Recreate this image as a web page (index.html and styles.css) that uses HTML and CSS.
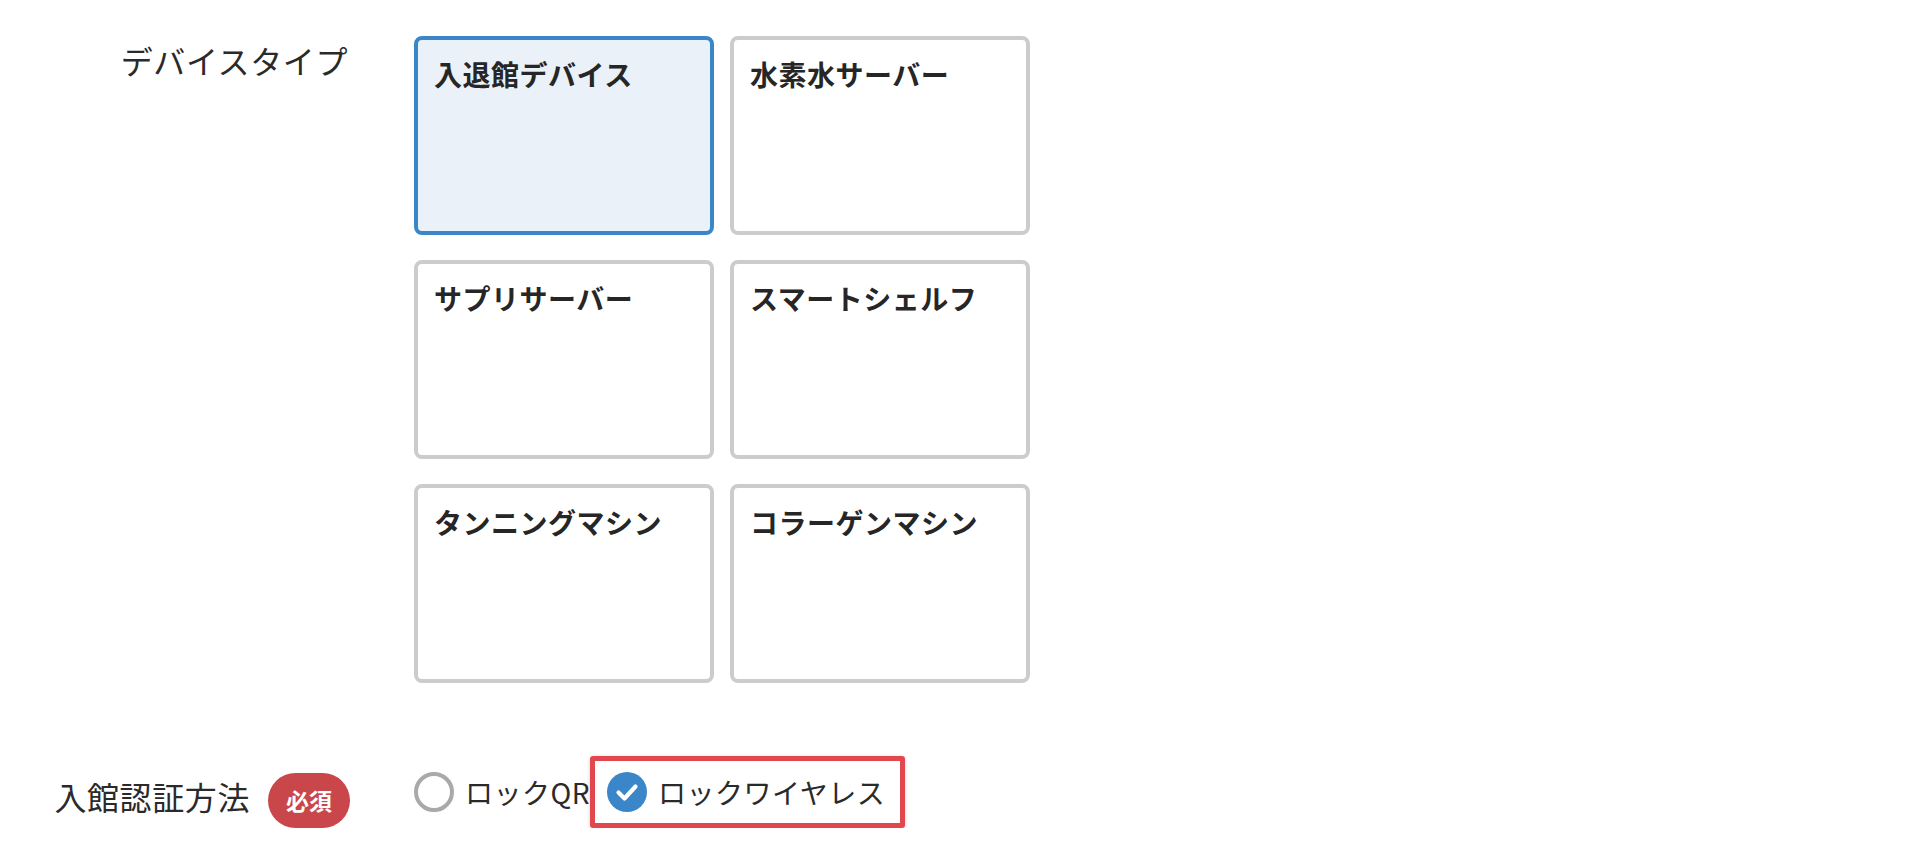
FILE: index.html
```html
<!DOCTYPE html>
<html lang="ja">
<head>
<meta charset="utf-8">
<title>デバイス設定</title>
<link rel="stylesheet" href="styles.css">
</head>
<body>
<div class="form">
  <div class="row row-top">
    <div class="label-col">
      <span class="label">デバイスタイプ</span>
    </div>
    <div class="content">
      <div class="cards">
        <div class="card selected"><span class="card-title">入退館デバイス</span></div>
        <div class="card"><span class="card-title">水素水サーバー</span></div>
        <div class="card"><span class="card-title">サプリサーバー</span></div>
        <div class="card"><span class="card-title">スマートシェルフ</span></div>
        <div class="card"><span class="card-title">タンニングマシン</span></div>
        <div class="card"><span class="card-title">コラーゲンマシン</span></div>
      </div>
    </div>
  </div>
  <div class="row row-bottom">
    <div class="label-col label-col-center">
      <span class="label">入館認証方法</span>
      <span class="badge">必須</span>
    </div>
    <div class="content radios">
      <label class="radio">
        <span class="radio-circle"></span>
        <span class="radio-text">ロックQR</span>
      </label>
      <label class="radio highlighted">
        <span class="radio-circle checked">
          <svg viewBox="0 0 40 40" width="40" height="40"><path d="M11.5 20.5 L17.5 26.5 L28.5 14.5" fill="none" stroke="#fff" stroke-width="4.2" stroke-linecap="round" stroke-linejoin="round"/></svg>
        </span>
        <span class="radio-text">ロックワイヤレス</span>
      </label>
    </div>
  </div>
</div>
</body>
</html>
```
FILE: styles.css
```css
* {
  box-sizing: border-box;
}

html, body {
  margin: 0;
  padding: 0;
  background: #ffffff;
}

body {
  font-family: "Noto Sans CJK JP", "Noto Sans", sans-serif;
  color: #2a2a2a;
}

.form {
  padding-top: 36px;
}

.row {
  display: flex;
  column-gap: 64px;
}

.row-top {
  align-items: flex-start;
}

.row-bottom {
  align-items: center;
  margin-top: 73px;
}

.label-col {
  width: 350px;
  display: flex;
  justify-content: flex-end;
  padding-right: 2px;
}

.label-col-center {
  align-items: center;
  gap: 18px;
  padding-right: 0;
  margin-top: 8px;
}

.label {
  font-size: 32px;
  line-height: 48px;
  font-weight: 400;
  letter-spacing: 0.6px;
  white-space: nowrap;
}

.badge {
  display: inline-flex;
  align-items: center;
  justify-content: center;
  width: 82px;
  height: 55px;
  border-radius: 28px;
  background: #c9464b;
  color: #ffffff;
  font-size: 23px;
  font-weight: 700;
  margin-top: 8px;
}

.cards {
  display: grid;
  grid-template-columns: 300px 300px;
  grid-auto-rows: 199px;
  column-gap: 16px;
  row-gap: 25px;
}

.card {
  border: 4px solid #cccccc;
  border-radius: 8px;
  background: #ffffff;
  padding: 13px 16px;
}

.card.selected {
  border-color: #3b86c8;
  background: #eaf1f8;
}

.card-title {
  font-size: 28px;
  line-height: 42px;
  font-weight: 700;
  letter-spacing: 0.5px;
  color: #262626;
  white-space: nowrap;
}

.radios {
  display: flex;
  align-items: center;
}

.radio {
  display: inline-flex;
  align-items: center;
  gap: 11px;
}

.radio-circle {
  width: 40px;
  height: 40px;
  border-radius: 50%;
  border: 4px solid #a9a9a9;
  background: #ffffff;
  flex: none;
}

.radio-circle.checked {
  border: none;
  background: #3b86c8;
  display: flex;
}

.radio-circle.checked svg {
  display: block;
}

.radio-text {
  font-size: 28px;
  line-height: 42px;
  letter-spacing: 0.5px;
  color: #2a2a2a;
  white-space: nowrap;
}

.highlighted {
  border: 5px solid #e2474d;
  border-radius: 3px;
  padding: 10px 15px 10px 12px;
  gap: 11px;
  box-shadow: 0 1px 4px rgba(0, 0, 0, 0.18);
}
```
